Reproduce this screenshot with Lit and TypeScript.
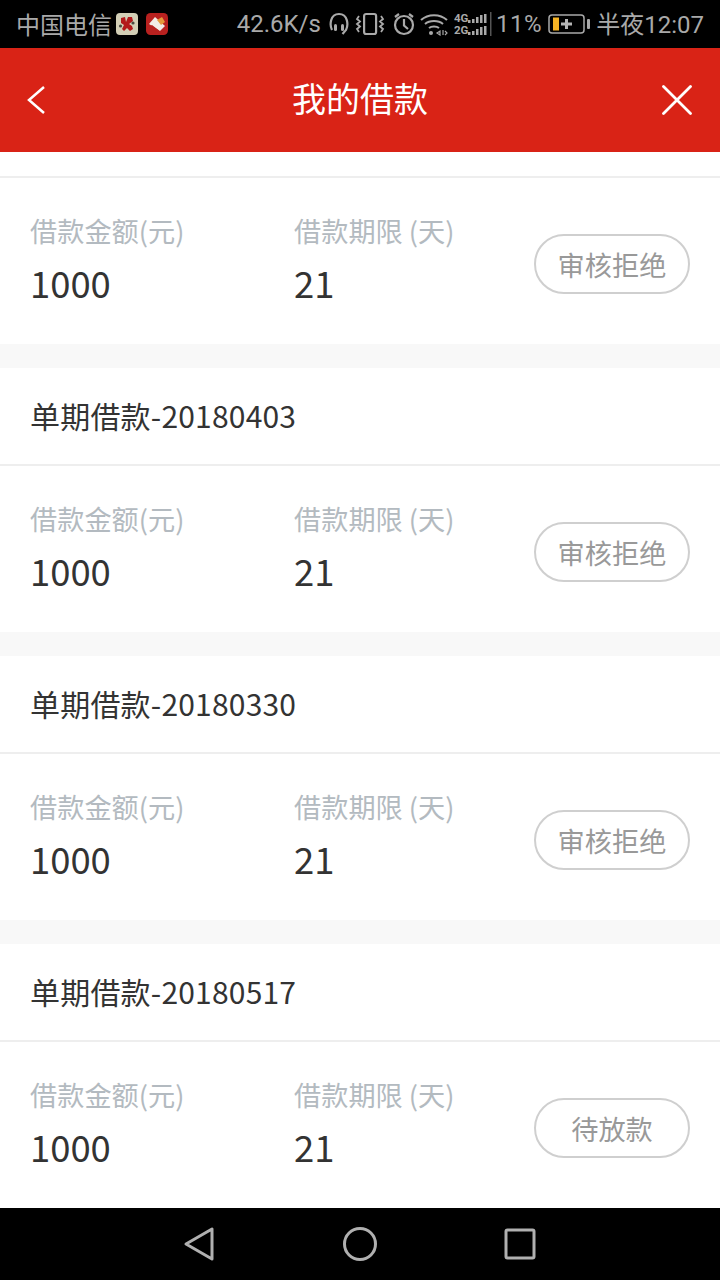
import { LitElement, html, css, svg } from "lit";
import { customElement } from "lit/decorators.js";

const loans = [
  { title: "单期借款-20180403", status: "审核拒绝" },
  { title: "单期借款-20180330", status: "审核拒绝" },
  { title: "单期借款-20180517", status: "待放款" },
];

const bars = (y: number) => svg`
  <rect x="14" y="${y + 6}" width="2.500" height="3" />
  <rect x="18" y="${y + 5}" width="2.500" height="4" />
  <rect x="22" y="${y + 3}" width="2.500" height="6" />
  <rect x="26" y="${y + 1}" width="2.500" height="8" />
  <rect x="30" y="${y}" width="2.500" height="9" />`;

@customElement("app-root")
export class AppRoot extends LitElement {
  static styles = css`
    :host {
      display: block;
      width: 720px;
      height: 1280px;
      overflow: hidden;
      background: #fff;
      font-family: "Noto Sans CJK SC", "Noto Sans", sans-serif;
    }
    * { box-sizing: border-box; }
    .page { display: flex; flex-direction: column; height: 1280px; }
    .status {
      flex: 0 0 48px;
      height: 48px;
      background: #000;
      color: #a9a9a9;
      display: flex;
      align-items: center;
      justify-content: space-between;
      padding: 0 16px;
      font-size: 24px;
      line-height: 28px;
    }
    .status-side { display: flex; align-items: center; height: 48px; }
    .status svg { display: block; flex: none; }
    .app-a { margin-left: 4px; }
    .app-b { margin-left: 8px; }
    .speed { font-family: Roboto, sans-serif; }
    .ml8 { margin-left: 8px; }
    .ml6 { margin-left: 6px; }
    .ml5 { margin-left: 5px; }
    .pct { font-family: Roboto, sans-serif; margin-left: 4px; letter-spacing: 0.6px; }
    .clock { margin-left: 6px; }
    .clock-num { font-family: Roboto, sans-serif; }
    .nav {
      flex: 0 0 104px;
      background: #d92316;
      display: flex;
      align-items: center;
      justify-content: space-between;
      padding: 0 28px 0 26px;
      position: relative;
    }
    .nav svg { display: block; }
    .nav-title {
      position: absolute;
      inset: 0;
      padding-bottom: 4px;
      display: flex;
      align-items: center;
      justify-content: center;
      color: #fff;
      font-size: 34px;
      line-height: 44px;
    }
    .list { flex: 1 1 0; min-height: 0; overflow: hidden; }
    .top-stub { height: 24px; background: #fff; }
    .card-title {
      height: 96px;
      padding-left: 30px;
      font-size: 30px;
      line-height: 94px;
      letter-spacing: 0.2px;
      color: #333;
      background: #fff;
    }
    .rule { height: 2px; background: #eeeeee; }
    .row {
      height: 166px;
      padding: 0 30px;
      display: flex;
      align-items: flex-start;
      background: #fff;
    }
    .col { display: flex; flex-direction: column; padding-top: 32px; }
    .col-a { width: 264px; }
    .col-b { width: 240px; }
    .label { font-size: 27.2px; line-height: 40px; color: #b3bac0; white-space: pre; }
    .value { font-size: 36.4px; line-height: 52px; margin-top: 6px; color: #333; }
    .pill {
      margin-top: 56px;
      width: 156px;
      height: 60px;
      border: 2px solid #cfcfcf;
      border-radius: 30px;
      color: #999;
      font-size: 27.2px;
      display: flex;
      align-items: center;
      justify-content: center;
      line-height: 54px;
    }
    .gap { height: 24px; background: #f8f8f8; }
    .sys {
      flex: 0 0 72px;
      background: #000;
      display: flex;
      align-items: center;
      justify-content: space-between;
      padding: 0 184px 0 183px;
    }
    .sys svg { display: block; }
  `;

  private card(title: string | null, status: string, last = false) {
    return html`
      ${title === null
        ? html`<div class="top-stub"></div>`
        : html`<div class="card-title">${title}</div>`}
      <div class="rule"></div>
      <div class="row">
        <div class="col col-a">
          <div class="label">借款金额(元)</div>
          <div class="value">1000</div>
        </div>
        <div class="col col-b">
          <div class="label">借款期限 (天)</div>
          <div class="value">21</div>
        </div>
        <div class="pill">${status}</div>
      </div>
      ${last ? "" : html`<div class="gap"></div>`}
    `;
  }

  render() {
    return html`
      <div class="page">
        <div class="status">
          <div class="status-side">
            <span>中国电信</span>
            <svg class="app-a" width="22" height="22" viewBox="0 0 22 22">
              <rect width="22" height="22" rx="4" fill="#d3cfb6" />
              <path d="M5 5l4-1 1 5 2-5 4 0 1 4-4 3 3 2 1 3-3 2-3-3-3 3-2-2 2-4-3-2z" fill="#b3191b" />
              <circle cx="4.500" cy="13" r="1.600" fill="#4a4a40" />
              <circle cx="17" cy="10" r="1.600" fill="#4a4a40" />
            </svg>
            <svg class="app-b" width="22" height="22" viewBox="0 0 22 22">
              <rect width="22" height="22" rx="4.500" fill="#b8211f" />
              <path d="M3 11l6-7 10 9-5 5z" fill="#f2ece6" />
              <path d="M11 7l5-3 3 5-4 3z" fill="#e59a3a" />
              <path d="M6 12l7 5.500-1.500 1-7-5.500z" fill="#b8211f" />
            </svg>
          </div>
          <div class="status-side">
            <span class="speed">42.6K/s</span>
            <svg class="ml8" width="20" height="24" viewBox="0 0 20 24" fill="none" stroke="#a9a9a9" stroke-width="2.200">
              <path d="M3 18C0.500 13 1 2 10 2s9.500 11 7 16l-3.500 4" />
              <rect x="5" y="12" width="3" height="7" rx="1.500" fill="#a9a9a9" stroke="none" />
              <rect x="12" y="12" width="3" height="7" rx="1.500" fill="#a9a9a9" stroke="none" />
            </svg>
            <svg class="ml6" width="30" height="24" viewBox="0 0 30 24" fill="none" stroke="#a9a9a9" stroke-width="2.200">
              <rect x="9.100" y="2" width="12" height="20" rx="2" />
              <path d="M4 4l-2 3 3 2.500-3 2.500 3 2.500-3 2.500 2 3M26 4l2 3-3 2.500 3 2.500-3 2.500 3 2.500-2 3" stroke-width="1.800" />
            </svg>
            <svg class="ml8" width="22" height="24" viewBox="0 0 22 24" fill="none" stroke="#a9a9a9" stroke-width="2.200">
              <circle cx="11" cy="13" r="9" />
              <path d="M11 7v6.500l4 3.500M2 5l4-3M20 5l-4-3" />
            </svg>
            <svg class="ml5" width="28" height="24" viewBox="0 0 28 24" fill="none" stroke="#a9a9a9" stroke-width="2">
              <path d="M1 8c7-6.500 19-6.500 26 0M5 12c4.500-4 13.500-4 18 0M9 16c2.500-2 7.500-2 10 0" />
              <circle cx="11" cy="21" r="2" fill="#a9a9a9" stroke="none" />
              <path d="M17 21l3-2v4zM23 18v5M25 19l2 2-2 2" stroke-width="1.200" />
            </svg>
            <svg class="ml6" width="38" height="24" viewBox="0 0 38 24" fill="#a9a9a9">
              <text x="0" y="10" font-size="11.500" font-weight="700" font-family="Roboto, sans-serif">4G</text>
              <text x="0" y="22" font-size="11.500" font-weight="700" font-family="Roboto, sans-serif">2G</text>
              ${bars(2)}${bars(14)}
              <rect x="36" y="0" width="1.500" height="24" fill="#555" />
            </svg>
            <span class="pct">11%</span>
            <svg class="ml6" width="42" height="20" viewBox="0 0 42 20">
              <rect x="1" y="1" width="35" height="18" rx="3" fill="none" stroke="#a9a9a9" stroke-width="1.500" />
              <rect x="5" y="3.500" width="6" height="13" fill="#f5b324" />
              <path d="M13 10h11M18.500 5v10" stroke="#b5b5b5" stroke-width="3" fill="none" />
              <rect x="39" y="5" width="3" height="10" rx="1" fill="#a9a9a9" />
            </svg>
            <span class="clock">半夜<span class="clock-num">12:07</span></span>
          </div>
        </div>
        <div class="nav">
          <svg width="20" height="30" viewBox="0 0 20 30" fill="none" stroke="#fff" stroke-width="2.500">
            <path d="M18 2L3 15l15 13" />
          </svg>
          <div class="nav-title">我的借款</div>
          <svg width="30" height="30" viewBox="0 0 30 30" fill="none" stroke="#fff" stroke-width="2.800" stroke-linecap="round">
            <path d="M1.500 1.500l27 27M28.500 1.500l-27 27" />
          </svg>
        </div>
        <div class="list">
          ${this.card(null, "审核拒绝")}
          ${loans.map((l, i) => this.card(l.title, l.status, i === loans.length - 1))}
        </div>
        <div class="sys">
          <svg width="32" height="36" viewBox="0 0 32 36" fill="none" stroke="#b0b0b0" stroke-width="3" stroke-linejoin="round">
            <path d="M29 3v30L3 18z" />
          </svg>
          <svg width="34" height="34" viewBox="0 0 34 34" fill="none" stroke="#b0b0b0" stroke-width="3">
            <circle cx="17" cy="17" r="15.500" />
          </svg>
          <svg width="32" height="32" viewBox="0 0 32 32" fill="none" stroke="#b0b0b0" stroke-width="3" stroke-linejoin="round">
            <rect x="2" y="2" width="28" height="28" rx="1.500" />
          </svg>
        </div>
      </div>
    `;
  }
}
